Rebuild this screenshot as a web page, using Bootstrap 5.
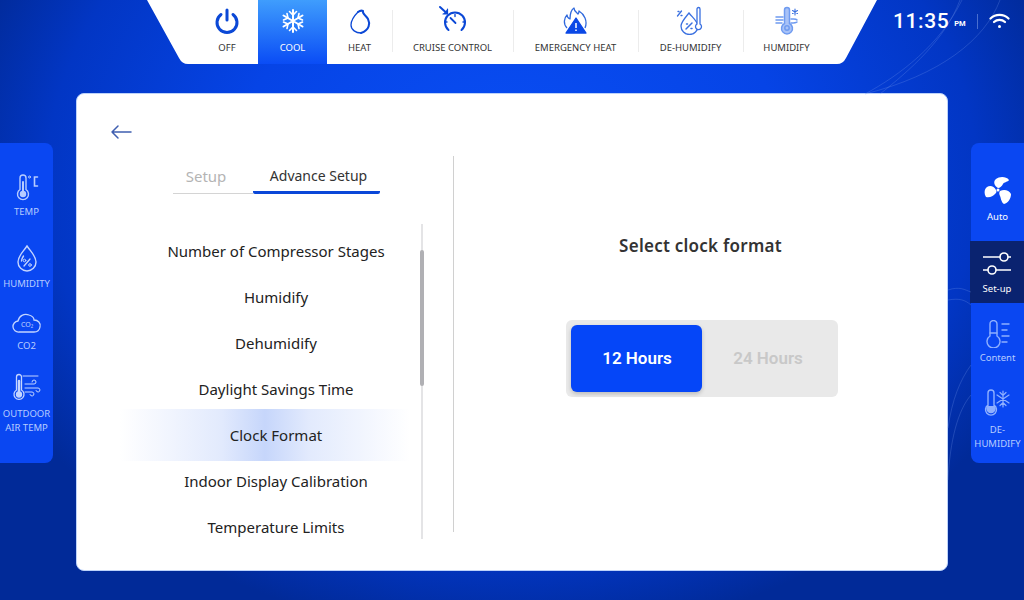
<!DOCTYPE html>
<html lang="en">
<head>
  <meta charset="UTF-8" />
  <meta name="viewport" content="width=device-width, initial-scale=1" />
  <title>Thermostat - Clock Format</title>
  <link href="https://cdn.jsdelivr.net/npm/bootstrap@5.3.0/dist/css/bootstrap.min.css" rel="stylesheet" />
  <style>
    html, body { height: 100%; }
    body {
      width: 1024px;
      height: 600px;
      overflow: hidden;
      position: relative;
      font-family: "Noto Sans", "Open Sans", sans-serif;
      background: radial-gradient(ellipse 620px 500px at 50% 30%, #0a4ff5 0%, #0644e6 45%, #0236c4 75%, #012a98 92%);
    }
    .deco-lines { position: absolute; left: 0; top: 0; pointer-events: none; }
    .top-row { position: relative; height: 93px; }
    .top-bar {
      width: 730px;
      height: 64px;
      margin-left: 147px;
      background: #fff;
      clip-path: path("M0 0 H730 L699 58 Q696 64 690 64 H41 Q35 64 32 58 Z");
      padding-left: 49px;
    }
    .mode {
      height: 64px;
      font-size: 9.5px;
      color: #333;
      position: relative;
    }
    .mode svg { display: block; margin-top: 5px; height: 30px; }
    .mode span { margin-top: 6px; line-height: 13px; white-space: nowrap; }
    .mode-sep::after {
      content: "";
      position: absolute;
      right: -1px;
      top: 10px;
      bottom: 12px;
      width: 1px;
      background: #ececec;
    }
    .mode-on { color: #fff; background: linear-gradient(180deg, #3f9dfd 0%, #0a4cf5 100%); }
    .status { color: #fff; padding-left: 16px; height: 42px; }
    .clock-time { font-family: Roboto, sans-serif; font-weight: 500; font-size: 21px; letter-spacing: .6px; line-height: 1; }
    .clock-ampm { font-family: Roboto, sans-serif; font-weight: 700; font-size: 7.5px; margin: 5px 11px 0 5px; }
    .status-sep { width: 1px; height: 15px; background: #4a6fd0; margin-right: 11px; }

    .main-row { height: 507px; }
    .rail {
      width: 53px;
      height: 320px;
      margin-top: 50px;
      background: #0a47f2;
      color: #b7ccff;
      font-size: 9.5px;
      line-height: 14px;
      text-align: center;
    }
    .rail-left { border-radius: 0 8px 8px 0; margin-right: 23px; }
    .rail-right { border-radius: 8px 0 0 8px; margin-left: 23px; }
    .rail-item svg { display: block; margin: 0 auto; width: 32px; height: 28px; }
    .rail-left .rail-item:nth-child(1) { margin-top: 30px; }
    .rail-left .rail-item:nth-child(1) svg { margin-bottom: 4px; }
    .rail-left .rail-item:nth-child(2) { margin-top: 25px; }
    .rail-left .rail-item:nth-child(2) svg { margin-bottom: 5px; }
    .rail-left .rail-item:nth-child(3) { margin-top: 19px; }
    .rail-left .rail-item:nth-child(3) svg { margin-bottom: 1px; }
    .rail-left .rail-item:nth-child(4) { margin-top: 20px; }
    .rail-left .rail-item:nth-child(4) svg { margin-bottom: 6px; }
    .rail-right .rail-item:nth-child(1) { margin-top: 31px; height: 67px; color: #fff; }
    .rail-right .rail-item:nth-child(1) svg { width: 32px; height: 32px; margin-bottom: 4px; }
    .rail-right .rail-item:nth-child(2) { height: 62px; padding-top: 8px; margin-left: -1px; background: #0a2370; color: #fff; }
    .rail-right .rail-item:nth-child(2) svg { margin-bottom: 5px; }
    .rail-right .rail-item:nth-child(3) { margin-top: 17px; }
    .rail-right .rail-item:nth-child(3) svg { margin-bottom: 3px; }
    .rail-right .rail-item:nth-child(4) { margin-top: 23px; }
    .rail-right .rail-item:nth-child(4) svg { margin-bottom: 7px; }

    .panel {
      width: 872px;
      height: 478px;
      background: #fff;
      border: 1px solid #bcd2fa;
      border-radius: 8px;
    }
    .panel-top { height: 62px; padding: 30px 0 0 33px; }
    .left-col { width: 376px; height: 383px; }
    .tab-strip { margin: 0 0 0 96px; width: 207px; height: 38px; flex-wrap: nowrap; }
    .tab-strip .nav-link {
      padding: 9px 0 0;
      height: 38px;
      font-size: 14px;
      line-height: 22px;
      text-align: center;
      color: #b4b4b4;
      border-bottom: 1px solid #d4d4d4;
    }
    .tab-one { width: 80px; padding-right: 14px !important; font-size: 15px !important; }
    .tab-two { width: 127px; padding-left: 4px !important; }
    .tab-strip .tab-two.active {
      color: #333;
      border-bottom: 3px solid #0a47d8;
      border-radius: 0 0 2px 2px;
    }
    .list-wrap { margin: 30px 0 0 43px; height: 315px; }
    .opt-list { width: 290px; padding-top: 4px; overflow: hidden; }
    .opt-list .list-group-item {
      height: 46px;
      padding: 0 0 0 22px;
      border: 0;
      background: transparent;
      color: #222;
      font-size: 15px;
      line-height: 46px;
      text-align: center;
      white-space: nowrap;
    }
    .opt-list .list-group-item.opt-on {
      height: 52px;
      margin: -3px 0;
      line-height: 52px;
      position: relative;
      z-index: 1;
      background: linear-gradient(90deg, #fff 0%, #e2eafd 35%, #c6d6fb 50%, #e2eafd 65%, #fff 100%);
    }
    .scroll-track { width: 2px; margin-left: 11px; background: #e4e4e6; padding-top: 26px; }
    .scroll-thumb { width: 4px; height: 136px; margin-left: -1px; background: #b0b0b4; border-radius: 2px; }
    .right-col { width: 494px; height: 376px; border-left: 1px solid #d0d0d0; }
    .clock-title { margin: 78px 0 0; font-size: 17px; letter-spacing: .25px; line-height: 24px; font-weight: 600; color: #333; }
    .clock-toggle { margin: 62px 0 0 2px; width: 272px; height: 77px; padding: 5px; background: #e9e9e9; border-radius: 6px; }
    .clock-toggle .btn {
      flex: 1 1 0;
      padding: 0 0 0 2px;
      border: 0;
      font-family: Roboto, sans-serif;
      font-weight: 600;
      font-size: 17px;
      color: #c8c8c8;
      border-radius: 6px;
    }
    .clock-toggle .btn.btn-primary { background: #0546f8; color: #fff; box-shadow: 0 2px 4px rgba(0,0,0,.2); }
  </style>
</head>
<body>

  <svg class="deco-lines" width="1024" height="600" fill="none" stroke="#7fa0f0" stroke-opacity=".35" stroke-width=".7">
    <path d="M1000 0 C985 40 940 75 865 94" />
    <path d="M960 0 C945 40 910 70 880 94" />
    <path d="M962 0 C940 45 900 75 865 94" />
    <path d="M948 300 C960 298 965 300 971 305" />
    <path d="M948 290 C960 286 965 290 971 292" />
    <path d="M948 428 C952 400 960 380 971 365" />
    <path d="M948 480 C950 440 958 410 971 395" />
  </svg>

  <div class="top-row d-flex align-items-start">
    <div class="top-bar d-flex">
      <div class="mode d-flex flex-column align-items-center" style="width:62px">
        <svg width="30" height="30" viewBox="0 0 30 30" fill="none" stroke="#0b48d6" stroke-width="3" stroke-linecap="round"><path d="M9 9.500a10 10 0 1 0 12 0" /><path d="M15 5v10" /></svg>
        <span>OFF</span>
      </div>
      <div class="mode mode-on d-flex flex-column align-items-center" style="width:69px">
        <svg width="30" height="30" viewBox="0 0 30 30" fill="none" stroke="#fff" stroke-width="2" stroke-linecap="round"><path d="M15 5v22M5.500 10.500l19 11M24.500 10.500l-19 11" /><path d="M11.500 6.500 15 10l3.500-3.500M11.500 25.500 15 22l3.500 3.500M5.500 15l4.500-2-1-4.500M24.500 15l-4.500-2 1-4.500M5.500 17l4.500 2-1 4.500M24.500 17l-4.500 2 1 4.500" stroke-width="1.600" /></svg>
        <span>COOL</span>
      </div>
      <div class="mode mode-sep d-flex flex-column align-items-center" style="width:65px">
        <svg width="30" height="30" viewBox="0 0 30 30" fill="none" stroke="#0b48d6" stroke-width="1.300" stroke-linecap="round" stroke-linejoin="round"><path d="M13 7C10 10 6 14 6 20 6 25 11 28 16 28" /><path d="M13 7C15 5.500 17 5.500 18 6 17 9 21 10 23 14 25 18 25 25 16 28" stroke-width="2" /></svg>
        <span>HEAT</span>
      </div>
      <div class="mode mode-sep d-flex flex-column align-items-center" style="width:121px">
        <svg width="30" height="30" viewBox="0 0 30 30" fill="none" stroke="#0b48d6" stroke-width="2" stroke-linecap="round"><path d="M10.500 25a10 10 0 1 1 13 0" /><path d="M12.500 13l5 5" stroke-width="1.800" /><path d="M2 2l6 5.500" stroke-width="2" /><path d="M9.500 4v5H5" fill="#0b48d6" stroke-width="1.200" /><path d="M17 9.500v2M25 17h2M9 17H7" stroke-width="1.400" /></svg>
        <span>CRUISE CONTROL</span>
      </div>
      <div class="mode mode-sep d-flex flex-column align-items-center" style="width:125px">
        <svg width="30" height="30" viewBox="0 0 30 30" fill="none" stroke="#2f68dc" stroke-width="1.300" stroke-linejoin="round"><path d="M6 23C2 19 3 13 6 10c0 2 1 3 3 4 0-5 1-9 4-11 0 3 2 4 4 6 1-1 1-2 1-3 5 3 9 10 6 17" /><path d="M15 13 25 28H5z" fill="#0b48e6" stroke="#0b48e6" /><path d="M15 18v5M15 24.500v1.500" stroke="#fff" stroke-width="1.500" /></svg>
        <span>EMERGENCY HEAT</span>
      </div>
      <div class="mode mode-sep d-flex flex-column align-items-center" style="width:105px">
        <svg width="30" height="30" viewBox="0 0 30 30" fill="none" stroke="#3a70e0" stroke-width="1.300" stroke-linecap="round"><path d="M13 8c-4 5-8 9-8 13a8.500 8.500 0 0 0 17 0c0-4-5-8-9-13z" /><path d="M21 4a1.500 1.500 0 0 1 3 0v15a3 3 0 1 1-3 0z" fill="#fff" /><path d="M10 24l6-6M10.500 19h1M15 23.500h1" stroke-width="1.500" /><path d="M1.500 11l4-5M2 6.500h1M5 10.500h1" /></svg>
        <span>DE-HUMIDIFY</span>
      </div>
      <div class="mode d-flex flex-column align-items-center" style="width:87px">
        <svg width="30" height="30" viewBox="0 0 30 30" fill="none" stroke="#6f9bf0" stroke-width="1.500" stroke-linecap="round"><path d="M12.500 5a2.500 2.500 0 0 1 5 0v13.500a5.500 5.500 0 1 1-5 0z" fill="#a8c2f7" /><circle cx="15" cy="23" r="2.200" /><path d="M4 12h7M4 15h7M4 18h6M19 14c3 0 5-.5 6 1M19 18c2 0 5 0 6-1" /><path d="M23 4v6M20.500 5.500l5 3M25.500 5.500l-5 3" stroke="#3a70e0" stroke-width="1.100" /></svg>
        <span>HUMIDIFY</span>
      </div>
    </div>
    <div class="status d-flex align-items-center">
      <span class="clock-time">11:35</span>
      <span class="clock-ampm">PM</span>
      <span class="status-sep"></span>
      <svg width="21" height="16" viewBox="0 0 21 16" fill="none" stroke="#fff" stroke-width="2.200" stroke-linecap="round"><path d="M1.500 5.500a13 13 0 0 1 18 0" /><path d="M5 9a8 8 0 0 1 11 0" /><circle cx="10.500" cy="13.500" r="1.500" fill="#fff" stroke="none" /></svg>
    </div>
  </div>

  <div class="main-row d-flex align-items-start">
    <div class="rail rail-left">
      <div class="rail-item">
        <svg viewBox="0 0 32 28" fill="none" stroke="#b7ccff" stroke-width="1.400" stroke-linecap="round"><path d="M9 5a3 3 0 0 1 6 0v11.500a5.500 5.500 0 1 1-6 0z" /><path d="M12 9v11" stroke-width="2" /><circle cx="12" cy="21" r="2.500" fill="#b7ccff" /><circle cx="18.500" cy="4" r="1" stroke-width="1" /><path d="M26.500 4h-3v9h3" stroke-width="1.600" /></svg>
        TEMP
      </div>
      <div class="rail-item">
        <svg viewBox="0 0 32 28" fill="none" stroke="#c4d5ff" stroke-width="1.400" stroke-linecap="round"><path d="M16 2c-4 6-9 10-9 16a9 9 0 0 0 18 0C25 12 20 8 16 2z" /><path d="M10.500 17c0-2 1-3.500 2-5" /><path d="M13 22l6-7" stroke-width="1.300" /><circle cx="13.500" cy="16.500" r="1.300" stroke-width="1" /><circle cx="19" cy="21" r="1.300" stroke-width="1" /></svg>
        HUMIDITY
      </div>
      <div class="rail-item">
        <svg viewBox="0 0 32 28" fill="none" stroke="#c4d5ff" stroke-width="1.300" stroke-linecap="round"><path d="M8 22a5.500 5.500 0 0 1-1-11c1-5 6-8 11-6 3 1 5 3 5 5 4 0 7 3 6 7-.5 3-3 5-6 5z" /><text x="16" y="17" text-anchor="middle" font-size="7" fill="#c4d5ff" stroke="none" font-family="Noto Sans, sans-serif">CO₂</text></svg>
        CO2
      </div>
      <div class="rail-item">
        <svg viewBox="0 0 32 28" fill="none" stroke="#c4d5ff" stroke-width="1.300" stroke-linecap="round"><path d="M5.500 4a2.500 2.500 0 0 1 5 0v13a5 5 0 1 1-5 0z" /><path d="M8 8v13" stroke-width="2.500" /><circle cx="8" cy="21.500" r="2.500" fill="#c4d5ff" /><path d="M12 3h15M14 11h9a2 2 0 1 0-2-2M14 15h13a2 2 0 1 1-2 2.500M14 19h7a2 2 0 1 1-2 2.500" stroke-width="1" /></svg>
        OUTDOOR<br />AIR TEMP
      </div>
    </div>

    <div class="panel">
      <div class="panel-top">
        <svg class="d-block" width="22" height="16" viewBox="0 0 22 16" fill="none" stroke="#3f5fb0" stroke-width="1.500" stroke-linecap="round" stroke-linejoin="round"><path d="M21 8H2M8 2 2 8l6 6" /></svg>
      </div>
      <div class="d-flex align-items-start">
        <div class="left-col">
          <ul class="nav tab-strip">
            <li class="nav-item"><a class="nav-link tab-one" href="#">Setup</a></li>
            <li class="nav-item"><a class="nav-link tab-two active" href="#">Advance Setup</a></li>
          </ul>
          <div class="list-wrap d-flex">
            <ul class="list-group list-group-flush opt-list">
              <li class="list-group-item">Number of Compressor Stages</li>
              <li class="list-group-item">Humidify</li>
              <li class="list-group-item">Dehumidify</li>
              <li class="list-group-item">Daylight Savings Time</li>
              <li class="list-group-item opt-on">Clock Format</li>
              <li class="list-group-item">Indoor Display Calibration</li>
              <li class="list-group-item">Temperature Limits</li>
            </ul>
            <div class="scroll-track"><div class="scroll-thumb"></div></div>
          </div>
        </div>
        <div class="right-col d-flex flex-column align-items-center">
          <h2 class="clock-title">Select clock format</h2>
          <div class="clock-toggle d-flex">
            <button type="button" class="btn btn-primary">12 Hours</button>
            <button type="button" class="btn">24 Hours</button>
          </div>
        </div>
      </div>
    </div>

    <div class="rail rail-right">
      <div class="rail-item">
        <svg viewBox="0 0 32 32" fill="#fff"><path d="M16 14C12 12 11 7 14 5 17 2.500 24 2 27 6 26 8 22 8 21 10 20 12 18 14 16 14z" /><path d="M14 16C12 12 8 11 5 13 2 15 2 20 4 23 8 24 11 22 13 20 14 19 15 18 14 16z" /><path d="M18 17C22 15 27 16 29 20 29 25 26 29 22 30 19 28 19 24 18 22 17 20 17 18 18 17z" /><circle cx="16" cy="16" r="1.500" /></svg>
        Auto
      </div>
      <div class="rail-item">
        <svg viewBox="0 0 32 28" fill="none" stroke="#fff" stroke-width="1.600"><path d="M2 8h17M27 8h3M2 21h5M15 21h15" /><circle cx="23" cy="8" r="4" /><circle cx="11" cy="21" r="4" /></svg>
        Set-up
      </div>
      <div class="rail-item">
        <svg viewBox="0 0 32 28" fill="none" stroke="#8fb0ff" stroke-width="1.400" stroke-linecap="round"><path d="M8 4a3.500 3.500 0 0 1 7 0v12a6.500 6.500 0 1 1-7 0z" /><path d="M8 13h7" /><path d="M20 4h7M20 10h5M20 16h7M20 22h5" /></svg>
        Content
      </div>
      <div class="rail-item">
        <svg viewBox="0 0 32 28" fill="none" stroke="#8fb0ff" stroke-width="1.400" stroke-linecap="round"><path d="M6 5a3 3 0 0 1 6 0v12a5.500 5.500 0 1 1-6 0z" /><path d="M6 18a4 4 0 1 0 6 0" fill="#8fb0ff" /><path d="M21 3v16M15 7l12 8M27 7l-12 8M18 4.500l3 3 3-3M18 17.500l3-3 3 3" stroke-width="1.200" /></svg>
        DE-<br />HUMIDIFY
      </div>
    </div>
  </div>

  <script src="https://cdn.jsdelivr.net/npm/bootstrap@5.3.0/dist/js/bootstrap.bundle.min.js"></script>
</body>
</html>
